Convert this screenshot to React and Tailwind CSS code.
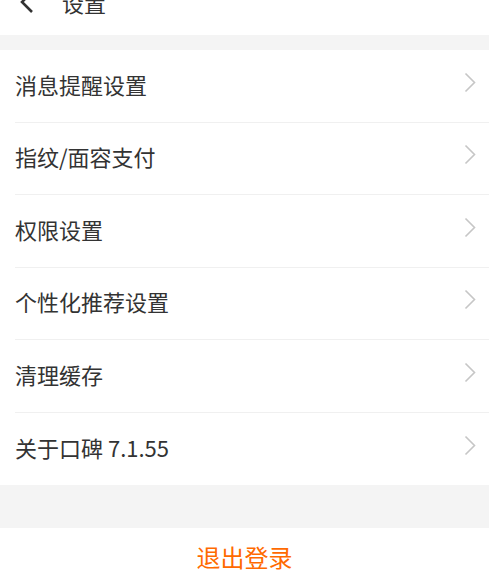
const items = ['消息提醒设置', '指纹/面容支付', '权限设置', '个性化推荐设置', '清理缓存', '关于口碑 7.1.55'];

function Row({ label, last }) {
  return (
    <div className="pl-[15px] bg-white">
      <div className={`h-[72.5px] flex items-center justify-between pr-[12px] ${last ? '' : 'border-b border-[#f0f0f0]'}`}>
        <span className="text-[22px] text-[#333333] leading-none mb-[4px]">{label}</span>
        <svg width="12" height="21" viewBox="0 0 12 21" fill="none" className="mr-[1px] mb-[7px]">
          <path d="M1.5 1.5 L10.5 10.5 L1.5 19.5" stroke="#c6c6c6" strokeWidth="1.6" />
        </svg>
      </div>
    </div>
  );
}

export default function App() {
  return (
    <div
      className="w-[489px] h-[587px] overflow-hidden bg-white flex flex-col"
      style={{ fontFamily: '"Noto Sans CJK SC", "Noto Sans", sans-serif' }}
    >
      {/* header, scrolled partly out of view */}
      <div className="h-[35px] shrink-0 overflow-hidden bg-white">
        <div className="h-[26px] -mt-[11px] flex items-center">
          <svg width="16" height="24" viewBox="0 0 16 24" fill="none" className="ml-[19px]">
            <path d="M13 2 L3 12 L13 22" stroke="#333333" strokeWidth="2.6" />
          </svg>
          <span className="ml-[27px] text-[22px] text-[#333333] leading-none">设置</span>
        </div>
      </div>
      <div className="h-[15px] shrink-0 bg-[#f4f4f4]" />
      <div className="flex flex-col shrink-0">
        {items.map((t, i) => (
          <Row key={t} label={t} last={i === items.length - 1} />
        ))}
      </div>
      <div className="h-[43px] shrink-0 bg-[#f4f4f4]" />
      <div className="flex-1 flex items-start justify-center pt-[15px] bg-white">
        <span className="text-[24px] text-[#ff6a00] leading-[28px]">退出登录</span>
      </div>
    </div>
  );
}
